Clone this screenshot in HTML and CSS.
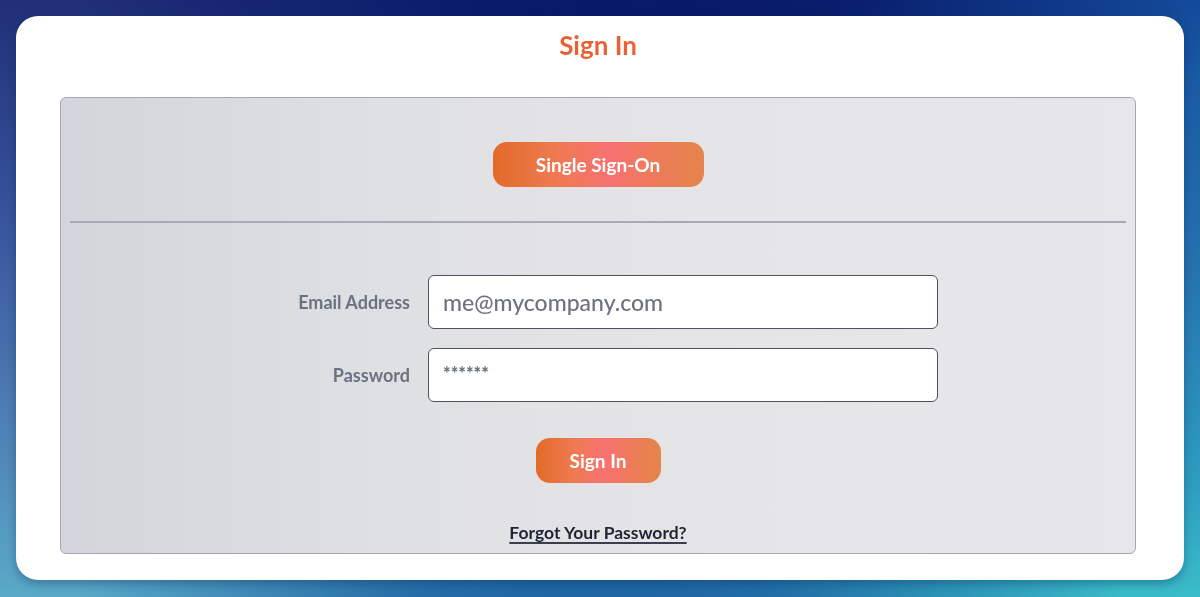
FILE: index.html
```html
<!DOCTYPE html>
<html lang="en">
<head>
<meta charset="utf-8">
<title>Sign In</title>
<link rel="stylesheet" href="styles.css">
</head>
<body>
<div class="page">
  <main class="card">
    <h1 class="title">Sign In</h1>
    <section class="panel">
      <div class="sso-row">
        <button class="btn btn-sso" type="button">Single Sign-On</button>
      </div>
      <hr class="divider">
      <form class="form">
        <label class="label" for="email">Email Address</label>
        <input class="input input-email" id="email" type="text" value="me@mycompany.com">
        <label class="label" for="pw">Password</label>
        <input class="input input-pw" id="pw" type="text" value="******">
      </form>
      <div class="submit-row">
        <button class="btn btn-signin" type="button">Sign In</button>
      </div>
      <div class="forgot-row">
        <a class="forgot" href="#">Forgot Your Password?</a>
      </div>
    </section>
  </main>
</div>
</body>
</html>
```
FILE: styles.css
```css
* { box-sizing: border-box; }
html, body { margin: 0; height: 100%; }
body {
  font-family: Lato, "Open Sans", sans-serif;
  background: linear-gradient(180deg, #1f2f78 0%, #3a58a0 40%, #4c78b0 65%, #5aaac8 100%);
  overflow: hidden;
  position: relative;
}
body::before {
  content: "";
  position: fixed;
  inset: 0;
  background: linear-gradient(180deg, #1450a0 0%, #2672ae 45%, #2e9cc0 80%, #3abcc8 100%);
  -webkit-mask-image: linear-gradient(90deg, transparent 20%, #000 75%);
  mask-image: linear-gradient(90deg, transparent 20%, #000 75%);
  z-index: -2;
}
body::after {
  content: "";
  position: fixed;
  inset: 0;
  background:
    radial-gradient(ellipse 50% 75% at 55% -20%, #071563 0%, rgba(7,21,99,0.85) 40%, rgba(7,21,99,0) 100%),
    radial-gradient(ellipse 45% 45% at 50% 110%, #1a5c9e 0%, rgba(26,92,158,0.8) 40%, rgba(26,92,158,0) 100%);
  z-index: -1;
}
.page {
  padding: 16px 16px 17px 16px;
  height: 597px;
}
.card {
  background: #fff;
  border-radius: 22px;
  height: 564px;
  padding: 0 48px 26px 44px;
  display: flex;
  flex-direction: column;
  box-shadow: 0 4px 10px rgba(10, 40, 90, 0.35);
}
.title {
  margin: 0;
  height: 81px;
  padding-top: 12px;
  text-align: center;
  font-size: 26px;
  line-height: 34px;
  font-weight: 700;
  background: linear-gradient(90deg, #e4572e, #f06a3a);
  -webkit-background-clip: text;
  background-clip: text;
  color: transparent;
}
.panel {
  flex: 1;
  border: 1px solid #a3a7b4;
  border-radius: 6px;
  background: linear-gradient(90deg, #d3d5dc 0%, #dfe0e3 30%, #e5e5e7 60%, #e7e7e9 100%);
  padding: 0 9px;
  display: flex;
  flex-direction: column;
}
.sso-row {
  display: flex;
  justify-content: center;
  padding-top: 44px;
}
.btn {
  border: none;
  color: #fff;
  font-family: inherit;
  font-weight: 700;
  font-size: 19px;
  height: 45px;
  border-radius: 14px;
  background: linear-gradient(90deg, #e26a28 0%, #ef7a52 30%, #f87171 55%, #ec7d57 80%, #e5844a 100%);
  padding: 0;
  cursor: pointer;
}
.btn-sso { width: 211px; }
.btn-signin { width: 125px; }
.divider {
  margin: 34px 0 0 0;
  border: none;
  height: 2px;
  background: #a6aaba;
}
.form {
  display: grid;
  grid-template-columns: 340px 510px;
  column-gap: 18px;
  row-gap: 19px;
  align-items: center;
  margin-top: 52px;
}
.label {
  text-align: right;
  font-size: 18px;
  font-weight: 700;
  color: #6b7280;
}
.input {
  height: 54px;
  border: 1px solid #4b5160;
  border-radius: 6px;
  background: #fff;
  padding: 0 14px;
  font-family: inherit;
  color: #6b7280;
  outline: none;
}
.input-email { font-size: 23px; font-weight: 500; }
.input-pw { font-size: 18px; font-weight: 900; padding-bottom: 4px; }
.submit-row {
  display: flex;
  justify-content: center;
  margin-top: 36px;
}
.forgot-row {
  display: flex;
  justify-content: center;
  margin-top: 39px;
}
.forgot {
  color: #1f2433;
  font-size: 17.5px;
  font-weight: 700;
  text-decoration: underline;
  text-decoration-thickness: 2px;
  text-underline-offset: 3px;
  text-decoration-color: #3a3f50;
}
```
